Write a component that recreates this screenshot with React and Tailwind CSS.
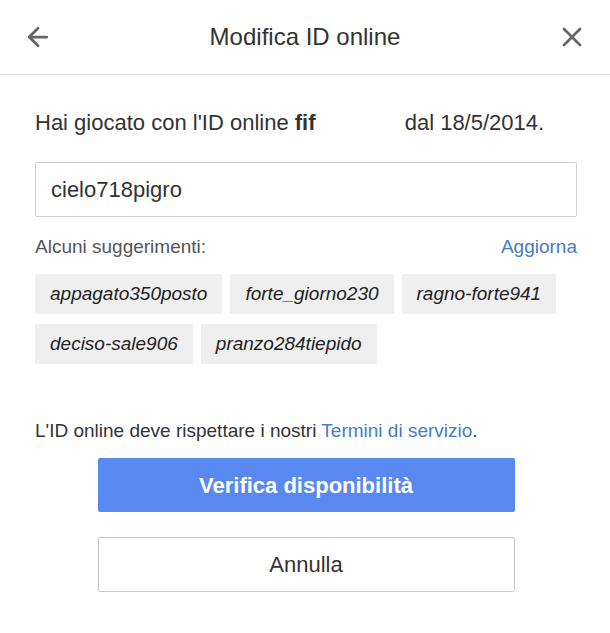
import React from 'react';
import { ArrowLeft, X } from 'lucide-react';

const suggestions = [
    'appagato350posto',
    'forte_giorno230',
    'ragno-forte941',
    'deciso-sale906',
    'pranzo284tiepido'
];

const App = () => {
    return (
        <div className="w-full min-h-[633px] bg-white text-[#333] font-['Liberation_Sans',Arial,sans-serif]">
            {/* Header */}
            <div className="h-[75px] flex items-center justify-between px-[22px] border-b border-[#e6e6e6]">
                <button className="w-[32px] h-[32px] flex items-center justify-center text-[#666]">
                    <ArrowLeft className="w-[30px] h-[30px]" strokeWidth={2.2} />
                </button>
                <h1 className="text-[24px] leading-[30px] text-[#333]">Modifica ID online</h1>
                <button className="w-[32px] h-[32px] flex items-center justify-center text-[#666]">
                    <X className="w-[32px] h-[32px]" strokeWidth={2} />
                </button>
            </div>

            {/* Body */}
            <div className="pl-[35px] pr-[33px] pt-[35px]">
                <p className="text-[22px] leading-[26px]">
                    Hai giocato con l'ID online <b>fif</b>
                    <span className="inline-block w-[83px]"></span> dal 18/5/2014.
                </p>

                <div className="mt-[26px] h-[55px] border border-[#cfcfcf] rounded-[2px] flex items-center px-[15px] text-[22px] text-[#333]">
                    cielo718pigro
                </div>

                <div className="mt-[18px] flex items-center justify-between text-[19px] leading-[24px]">
                    <span className="text-[#555]">Alcuni suggerimenti:</span>
                    <a className="text-[#4a7ac6]">Aggiorna</a>
                </div>

                <div className="mt-[15px] flex flex-wrap gap-x-[8px] gap-y-[10px]">
                    {suggestions.map((s) => (
                        <span
                            key={s}
                            className="h-[40px] px-[15px] flex items-center bg-[#efefef] rounded-[2px] italic text-[19px] text-[#222]"
                        >
                            {s}
                        </span>
                    ))}
                </div>

                <p className="mt-[55px] text-[19px] leading-[24px] text-[#333]">
                    L'ID online deve rispettare i nostri <a className="text-[#4a7ac6]">Termini di servizio</a>.
                </p>

                <button className="mt-[15px] mx-auto block w-[417px] h-[54px] bg-[#5888f0] rounded-[2px] text-white font-bold text-[22px]">
                    Verifica disponibilità
                </button>

                <button className="mt-[25px] mx-auto block w-[417px] h-[55px] bg-white border border-[#c8c8c8] rounded-[2px] text-[#333] text-[22px]">
                    Annulla
                </button>
            </div>
        </div>
    );
};

export default App;
